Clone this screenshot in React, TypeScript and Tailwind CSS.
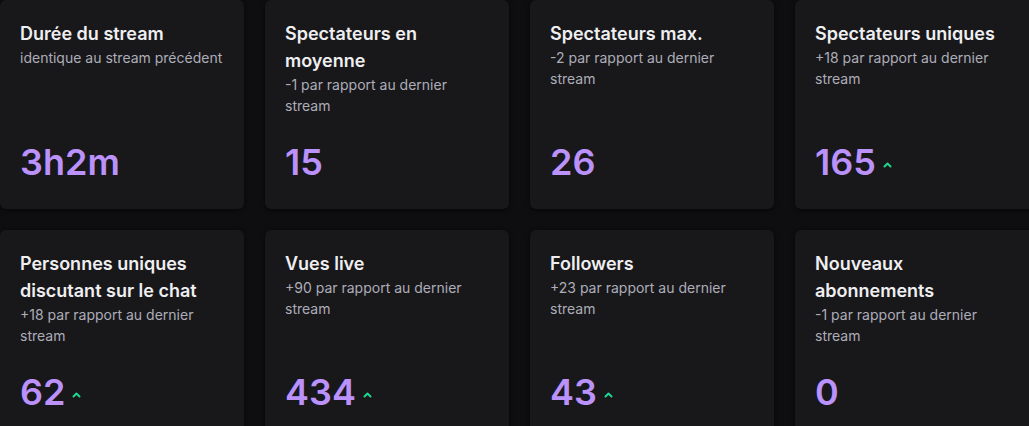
interface Stat {
  title: string;
  delta: string;
  value: string;
  up?: boolean;
}

const stats: Stat[] = [
  { title: 'Durée du stream', delta: 'identique au stream précédent', value: '3h2m' },
  { title: 'Spectateurs en moyenne', delta: '-1 par rapport au dernier stream', value: '15' },
  { title: 'Spectateurs max.', delta: '-2 par rapport au dernier stream', value: '26' },
  { title: 'Spectateurs uniques', delta: '+18 par rapport au dernier stream', value: '165', up: true },
  { title: 'Personnes uniques discutant sur le chat', delta: '+18 par rapport au dernier stream', value: '62', up: true },
  { title: 'Vues live', delta: '+90 par rapport au dernier stream', value: '434', up: true },
  { title: 'Followers', delta: '+23 par rapport au dernier stream', value: '43', up: true },
  { title: 'Nouveaux abonnements', delta: '-1 par rapport au dernier stream', value: '0' },
];

function Caret() {
  return (
    <svg width="9" height="6" viewBox="0 0 9 6" className="ml-[7px] mt-[6px]">
      <path d="M1.5 4.5 L4.5 1.5 L7.5 4.5" fill="none" stroke="#1fd68f" strokeWidth="2" strokeLinecap="round" strokeLinejoin="round" />
    </svg>
  );
}

function StatCard({ stat }: { stat: Stat }) {
  return (
    <div className="flex h-[209px] flex-col rounded-md bg-[#18181b] px-5 pt-5 pb-[27px] shadow-[0_1px_4px_rgba(0,0,0,0.6)]">
      <h3 className="text-[18px] font-semibold leading-[27px] text-[#efeff1]">{stat.title}</h3>
      <p className="text-[14px] leading-[21px] text-[#adadb8]">{stat.delta}</p>
      <div className="mt-auto flex items-center">
        <span className="text-[36px] font-semibold leading-[40px] text-[#bb92fb]">{stat.value}</span>
        {stat.up && <Caret />}
      </div>
    </div>
  );
}

export default function App() {
  return (
    <div className="h-[426px] w-[1029px] overflow-hidden bg-[#0e0e10] font-['Inter',sans-serif]">
      <div className="grid w-max grid-cols-[244px_244px_244px_244px] gap-[21px]">
        {stats.map((s) => (
          <StatCard key={s.title} stat={s} />
        ))}
      </div>
    </div>
  );
}
